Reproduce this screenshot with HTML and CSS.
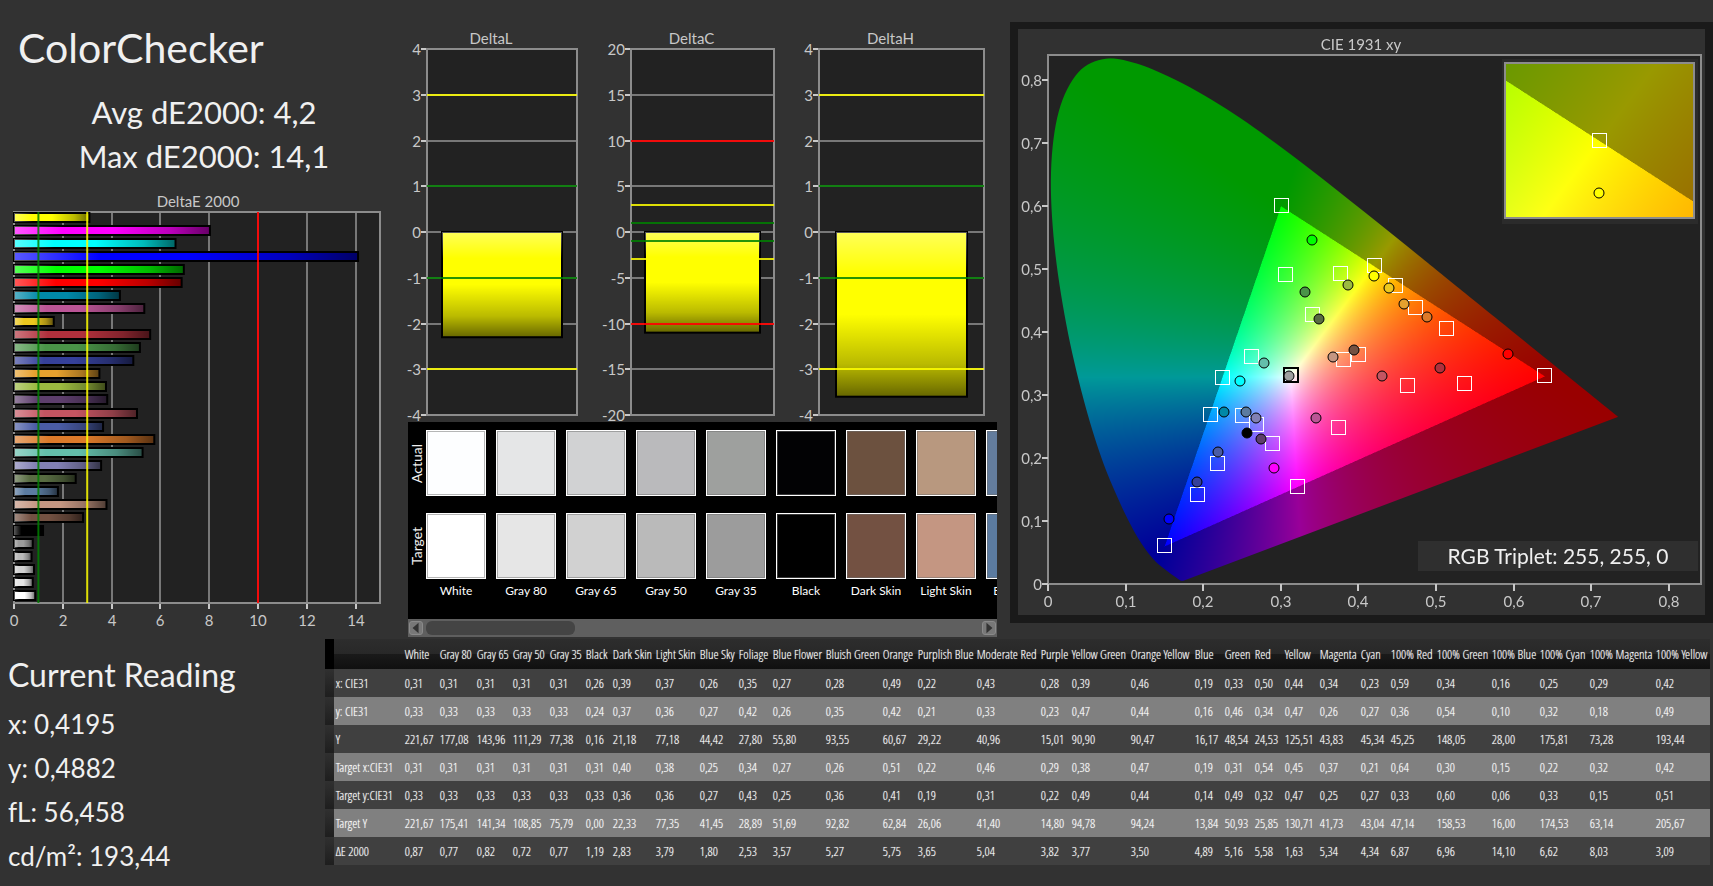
FILE: index.html
```
<!DOCTYPE html>
<html lang="en">
<head>
    <meta charset="UTF-8">
    <meta name="viewport" content="width=device-width, initial-scale=1.0">
    <title>ColorChecker</title>
    <link rel="stylesheet" href="styles.css">
</head>
<body>

<main class="top">
    <section class="summary">
        <h1>ColorChecker</h1>
        <div class="totals">
            <p>Avg dE2000: 4,2</p>
            <p>Max dE2000: 14,1</p>
        </div>
        <svg class="chart" id="deltaE" viewBox="0 0 408 443" role="img" aria-label="DeltaE 2000"></svg>
    </section>

    <section class="deltas">
        <svg class="chart" id="deltaLCH" viewBox="0 0 589 397" role="img" aria-label="DeltaL, DeltaC, DeltaH"></svg>
        <div class="swatches">
            <div class="swatch-row">
                <span class="side">Actual</span>
                <div class="patches" id="actual"></div>
            </div>
            <div class="swatch-row">
                <span class="side">Target</span>
                <div class="patches" id="target"></div>
            </div>
            <div class="swatch-row names">
                <span class="side"></span>
                <div class="patches" id="names"></div>
            </div>
        </div>
        <div class="scrollbar">
            <button type="button" aria-label="Scroll left"><svg viewBox="0 0 14 14"><path d="M10 1V13L3 7Z"/></svg></button>
            <div class="track"><div class="thumb"></div></div>
            <button type="button" aria-label="Scroll right"><svg viewBox="0 0 14 14"><path d="M4 1V13L11 7Z"/></svg></button>
        </div>
    </section>

    <section class="cie">
        <div class="cie-plot">
            <canvas id="gamut" width="1374" height="1172"></canvas>
            <svg class="chart" id="cie" viewBox="0 0 687 586" role="img" aria-label="CIE 1931 xy"></svg>
        </div>
    </section>
</main>

<div class="bottom">
    <section class="reading">
        <h2>Current Reading</h2>
        <p>x: 0,4195</p>
        <p>y: 0,4882</p>
        <p>fL: 56,458</p>
        <p>cd/m²: 193,44</p>
    </section>
    <table class="readings" id="readings"></table>
</div>

<script src="script.js"></script>
</body>
</html>
```
FILE: styles.css
```
* {
    box-sizing: border-box;
}
body {
    margin: 0;
    background: #323232;
    color: #f0f0f0;
    font-family: Lato, sans-serif;
}
h1, h2, p {
    margin: 0;
    font-weight: normal;
}
.top {
    display: grid;
    grid-template-columns: minmax(0, 408fr) minmax(0, 589fr) minmax(0, 716fr);
    align-items: start;
}
.chart {
    display: block;
    width: 100%;
    overflow: visible;
}
.chart text {
    font-size: 15px;
    fill: #c8c8c8;
}

/* left column */
.summary h1 {
    padding: 20px 0 0 18px;
    font-size: 41px;
    line-height: 56px;
}
.totals {
    padding: 14px 0 2px;
    text-align: center;
    font-size: 31px;
    line-height: 44px;
}
.summary .chart {
    margin-top: 12px;
}

/* bar charts */
.plot-bg {
    fill: #222;
}
.plot-frame {
    fill: none;
    stroke: #8c8c8c;
    stroke-width: 2;
}
.grid {
    stroke: #787878;
    stroke-width: 2;
}
.tick {
    stroke: #c8c8c8;
    stroke-width: 2;
}
.bar {
    stroke: #000;
    stroke-width: 2;
}
.green {
    stroke: #008000;
    stroke-width: 2;
    stroke-opacity: 0.85;
}
.yellow {
    stroke: #ff0;
    stroke-width: 2;
    stroke-opacity: 0.85;
}
.red {
    stroke: #f00;
    stroke-width: 2;
    stroke-opacity: 0.9;
}

/* middle column */
.deltas {
    padding-top: 25px;
}
.swatches {
    position: relative;
    height: 197px;
    padding-top: 8px;
    background: #000;
    overflow: hidden;
}
.swatch-row {
    display: flex;
    height: 83px;
}
.side {
    flex: none;
    width: 18px;
    height: 66px;
    writing-mode: vertical-rl;
    transform: rotate(180deg);
    text-align: center;
    font-size: 14px;
    line-height: 18px;
}
.patches {
    display: flex;
    gap: 10px;
}
.patch {
    flex: none;
    width: 60px;
    height: 66px;
    border: 1px solid #fff;
    box-shadow: inset 0 0 0 1px rgba(110, 110, 110, 0.5);
}
.names {
    height: 20px;
    margin-top: -15px;
}
.name {
    flex: none;
    width: 60px;
    text-align: center;
    white-space: nowrap;
    font-size: 12px;
    line-height: 20px;
    color: #fff;
}
.scrollbar {
    display: flex;
    height: 18px;
    padding: 2px 1px;
    gap: 3px;
    background: #5f5f5f;
}
.scrollbar button {
    width: 14px;
    height: 14px;
    padding: 0;
    border: 1px solid #8a8a8a;
    border-radius: 3px;
    background: #787878;
}
.scrollbar button svg {
    display: block;
    fill: #333;
}
.track {
    flex: 1;
}
.thumb {
    width: 27%;
    height: 14px;
    border-radius: 6px;
    background: #444;
}

/* chromaticity panel */
.cie {
    margin: 22px 0 0 13px;
    border: 8px solid #1a1a1a;
    border-top-width: 7px;
    background: #313131;
}
.cie-plot {
    display: grid;
}
.cie-plot canvas, .cie-plot svg {
    grid-area: 1 / 1;
    width: 100%;
}
.marker {
    fill: none;
    stroke: #fff;
    stroke-width: 1;
    shape-rendering: crispEdges;
}
.chart .white-point {
    stroke: #000;
    stroke-width: 2;
}
.reading-dot {
    stroke: #000;
    stroke-width: 1;
}
.triplet-box {
    fill: #2f2f2f;
}
.chart .triplet {
    font-size: 21px;
    fill: #f0f0f0;
}

/* bottom row */
.bottom {
    display: flex;
    align-items: flex-start;
    padding: 2px 4px 0 0;
}
.reading {
    flex: none;
    width: 19%;
    padding: 14px 0 0 8px;
    font-size: 26px;
    line-height: 44px;
}
.reading h2 {
    padding-bottom: 5px;
    font-size: 32px;
    line-height: 44px;
}
.readings {
    flex: 1;
    width: 81%;
    table-layout: fixed;
    border-collapse: collapse;
    font-family: "Open Sans Condensed Light", "Liberation Sans Narrow", "Roboto Condensed", "Open Sans Condensed", sans-serif;
    font-size: 13px;
    line-height: 28px;
    white-space: nowrap;
    color: #fff;
    text-shadow: 0 0 1px rgba(255, 255, 255, 0.6);
}
.readings th, .readings td {
    height: 28px;
    padding: 0 0 0 2px;
    text-align: left;
    font-weight: normal;
}
.readings thead th {
    height: 30px;
}
.readings thead tr {
    background: linear-gradient(#2d2d2d, #282828 50%, #1a1a1a 50%, #101010);
}
.readings tbody tr {
    background: #404040;
}
.readings tbody tr:nth-child(even) {
    background: #808080;
}
.readings thead .gutter {
    background: #000;
}
.readings tbody .gutter {
    background: linear-gradient(#303030, #1e1e1e);
}
```
FILE: script.js
```
// name, target colour, column width, then the table values
var samples = [
    ['White', '#ffffff', 35, '0,31', '0,33', '221,67', '0,31', '0,33', '221,67', '0,87'],
    ['Gray 80', '#e6e6e6', 37, '0,31', '0,33', '177,08', '0,31', '0,33', '175,41', '0,77'],
    ['Gray 65', '#d1d1d1', 36, '0,31', '0,33', '143,96', '0,31', '0,33', '141,34', '0,82'],
    ['Gray 50', '#bababa', 37, '0,31', '0,33', '111,29', '0,31', '0,33', '108,85', '0,72'],
    ['Gray 35', '#9c9c9c', 36, '0,31', '0,33', '77,38', '0,31', '0,33', '75,79', '0,77'],
    ['Black', '#000000', 27, '0,26', '0,24', '0,16', '0,31', '0,33', '0,00', '1,19'],
    ['Dark Skin', '#735142', 43, '0,39', '0,37', '21,18', '0,40', '0,36', '22,33', '2,83'],
    ['Light Skin', '#c49682', 44, '0,37', '0,36', '77,18', '0,38', '0,36', '77,35', '3,79'],
    ['Blue Sky', '#5b7ba0', 39, '0,26', '0,27', '44,42', '0,25', '0,27', '41,45', '1,80'],
    ['Foliage', '#586c42', 34, '0,35', '0,42', '27,80', '0,34', '0,43', '28,89', '2,53'],
    ['Blue Flower', '#8280b4', 53, '0,27', '0,26', '55,80', '0,27', '0,25', '51,69', '3,57'],
    ['Bluish Green', '#64beab', 57, '0,28', '0,35', '93,55', '0,26', '0,36', '92,82', '5,27'],
    ['Orange', '#dc7a2a', 35, '0,49', '0,42', '60,67', '0,51', '0,41', '62,84', '5,75'],
    ['Purplish Blue', '#4a5ca5', 59, '0,22', '0,21', '29,22', '0,22', '0,19', '26,06', '3,65'],
    ['Moderate Red', '#c45562', 64, '0,43', '0,33', '40,96', '0,46', '0,31', '41,40', '5,04'],
    ['Purple', '#5d3e6c', 31, '0,28', '0,23', '15,01', '0,29', '0,22', '14,80', '3,82'],
    ['Yellow Green', '#9bba40', 59, '0,39', '0,47', '90,90', '0,38', '0,49', '94,78', '3,77'],
    ['Orange Yellow', '#e6a12e', 64, '0,46', '0,44', '90,47', '0,47', '0,44', '94,24', '3,50'],
    ['Blue', '#35409a', 30, '0,19', '0,16', '16,17', '0,19', '0,14', '13,84', '4,89'],
    ['Green', '#4a9448', 30, '0,33', '0,46', '48,54', '0,31', '0,49', '50,93', '5,16'],
    ['Red', '#b0303c', 30, '0,50', '0,34', '24,53', '0,54', '0,32', '25,85', '5,58'],
    ['Yellow', '#ecc81e', 35, '0,44', '0,47', '125,51', '0,45', '0,47', '130,71', '1,63'],
    ['Magenta', '#bb5596', 41, '0,34', '0,26', '43,83', '0,37', '0,25', '41,73', '5,34'],
    ['Cyan', '#0088a8', 30, '0,23', '0,27', '45,34', '0,21', '0,27', '43,04', '4,34'],
    ['100% Red', '#ff0000', 46, '0,59', '0,36', '45,25', '0,64', '0,33', '47,14', '6,87'],
    ['100% Green', '#00ff00', 55, '0,34', '0,54', '148,05', '0,30', '0,60', '158,53', '6,96'],
    ['100% Blue', '#0000ff', 48, '0,16', '0,10', '28,00', '0,15', '0,06', '16,00', '14,10'],
    ['100% Cyan', '#00ffff', 50, '0,25', '0,32', '175,81', '0,22', '0,33', '174,53', '6,62'],
    ['100% Magenta', '#ff00ff', 66, '0,29', '0,18', '73,28', '0,32', '0,15', '63,14', '8,03'],
    ['100% Yellow', '#ffff00', 56, '0,42', '0,49', '193,44', '0,42', '0,51', '205,67', '3,09']
];
var rowNames = ['x: CIE31', 'y: CIE31', 'Y', 'Target x:CIE31', 'Target y:CIE31', 'Target Y', 'ΔE 2000'];
var actualColors = ['#fdfeff', '#e5e6e7', '#d1d2d3', '#bababc', '#9ea09e', '#020204', '#6c513f', '#b8987f', '#637c9c'];

function line(x1, y1, x2, y2, cls) {
    return '<line class="' + cls + '" x1="' + x1 + '" y1="' + y1 + '" x2="' + x2 + '" y2="' + y2 + '"/>';
}
function rect(x, y, w, h, cls, fill) {
    return '<rect class="' + cls + '" x="' + x + '" y="' + y + '" width="' + w + '" height="' + h + '"' +
        (fill ? ' fill="' + fill + '"' : '') + '/>';
}
function text(x, y, anchor, value, cls) {
    return '<text x="' + x + '" y="' + y + '" text-anchor="' + anchor + '" class="' + (cls || '') + '">' + value + '</text>';
}
function shine(id, x2, y2) {
    return '<defs><linearGradient id="' + id + '" x1="0" y1="0" x2="' + x2 + '" y2="' + y2 + '">' +
        '<stop offset="0" stop-color="#fff" stop-opacity="0.35"/>' +
        '<stop offset="0.25" stop-color="#fff" stop-opacity="0"/>' +
        '<stop offset="0.5" stop-color="#000" stop-opacity="0"/>' +
        '<stop offset="0.8" stop-color="#000" stop-opacity="0.27"/>' +
        '<stop offset="1" stop-color="#000" stop-opacity="0.6"/></linearGradient></defs>';
}

function drawDeltaE() {
    var left = 14, top = 20, width = 366, height = 391, unit = width / 15;
    var out = shine('shineX', 1, 0) + text(198, 15, 'middle', 'DeltaE 2000') + rect(left, top, width, height, 'plot-bg');
    for (var v = 0; v < 15; v += 2) {
        var x = Math.round(left + v * unit);
        out += line(x, top, x, top + height, 'grid') + line(x, top + height, x, top + height + 6, 'tick');
        out += text(x, top + height + 23, 'middle', v);
    }
    out += rect(left, top, width, height, 'plot-frame');
    for (var i = 0; i < samples.length; i++) {
        var s = samples[samples.length - 1 - i];
        var w = parseFloat(s[9].replace(',', '.')) * unit;
        var y = Math.round(top + 1 + i * height / samples.length);
        out += rect(left, y, w, 9, 'bar', s[1]) + rect(left, y, w, 9, '', 'url(#shineX)');
    }
    out += line(left + unit, top, left + unit, top + height, 'green');
    out += line(left + 3 * unit, top, left + 3 * unit, top + height, 'yellow');
    out += line(left + 10 * unit, top, left + 10 * unit, top + height, 'red');
    document.getElementById('deltaE').innerHTML = out;
}

function drawDelta(title, left, width, step, value, limits) {
    var top = 24, height = 366, unit = height / (8 * step), zero = top + height / 2;
    var out = text(left + width / 2 - 11, 19, 'middle', title) + rect(left, top, width, height, 'plot-bg');
    for (var i = -4; i <= 4; i++) {
        var y = Math.round(zero - i * step * unit);
        out += line(left, y, left + width, y, 'grid') + line(left - 6, y, left, y, 'tick');
        out += text(left - 6, y + 6, 'end', i * step);
    }
    out += rect(left, top, width, height, 'plot-frame');
    var pad = Math.round(width / 10);
    out += rect(left + pad, zero, width - 2 * pad, -value * unit, 'bar', '#ffff00');
    out += rect(left + pad, zero, width - 2 * pad, -value * unit, '', 'url(#shineY)');
    limits.forEach(function (l) {
        [l[0], -l[0]].forEach(function (v) {
            var y = Math.round(zero - v * unit);
            out += line(left, y, left + width, y, l[1]);
        });
    });
    return out;
}

function drawSwatches() {
    var actual = '', target = '', names = '';
    actualColors.forEach(function (color, i) {
        actual += '<div class="patch" style="background-color:' + color + '"></div>';
        target += '<div class="patch" style="background-color:' + samples[i][1] + '"></div>';
        names += '<div class="name">' + samples[i][0] + '</div>';
    });
    document.getElementById('actual').innerHTML = actual;
    document.getElementById('target').innerHTML = target;
    document.getElementById('names').innerHTML = names;
}

function drawTable() {
    var out = '<colgroup><col style="width:9px"><col style="width:69px">';
    var head = '<thead><tr><th class="gutter"></th><th></th>';
    samples.forEach(function (s) {
        out += '<col style="width:' + s[2] + 'px">';
        head += '<th scope="col">' + s[0] + '</th>';
    });
    out += '</colgroup>' + head + '</tr></thead><tbody>';
    rowNames.forEach(function (name, r) {
        out += '<tr><td class="gutter"></td><th scope="row">' + name + '</th>';
        samples.forEach(function (s) {
            out += '<td>' + s[r + 3] + '</td>';
        });
        out += '</tr>';
    });
    document.getElementById('readings').innerHTML = out + '</tbody>';
}

// CIE 1931 diagram
var originX = 30, originY = 555, scaleX = 776, scaleY = 630;
var locus = [
    [.1741, .0050], [.1714, .0051], [.1689, .0069], [.1644, .0109], [.1566, .0177], [.1440, .0297], [.1355, .0399],
    [.1241, .0578], [.1096, .0868], [.0913, .1327], [.0687, .2007], [.0454, .2950], [.0235, .4127], [.0082, .5384],
    [.0039, .6548], [.0139, .7502], [.0389, .8120], [.0743, .8338], [.1142, .8262], [.1547, .8059], [.1929, .7816],
    [.2296, .7543], [.2658, .7243], [.3016, .6923], [.3373, .6589], [.3731, .6245], [.4087, .5896], [.4441, .5547],
    [.4788, .5202], [.5125, .4866], [.5752, .4242], [.6270, .3725], [.6658, .3340], [.6915, .3083], [.7190, .2809],
    [.7347, .2653]
];
var targets = [
    [263, 176], [267, 245], [322, 244], [356, 236], [377, 256], [397, 278], [428, 299], [294, 285], [233, 327],
    [204, 348], [192, 385], [224, 386], [238, 395], [199, 434], [179, 465], [254, 414], [279, 457], [320, 398],
    [389, 356], [325, 330], [340, 325], [446, 354], [526, 346], [146, 516]
];
var dots = [
    [294, 211, '#00ff00'], [287, 263, '#4a9448'], [330, 256, '#9bba40'], [356, 247, '#ffff00'], [371, 259, '#ecc81e'],
    [386, 275, '#e6a12e'], [409, 288, '#dc7a2a'], [301, 290, '#586c42'], [246, 334, '#64beab'], [222, 352, '#00ffff'],
    [206, 383, '#0088a8'], [228, 383, '#5b7ba0'], [238, 389, '#8280b4'], [229, 404, '#000000'], [243, 410, '#5d3e6c'],
    [200, 423, '#4a5ca5'], [179, 453, '#35409a'], [256, 439, '#ff00ff'], [298, 389, '#bb5596'], [315, 328, '#c49682'],
    [336, 321, '#735142'], [364, 347, '#c45562'], [422, 339, '#b0303c'], [271, 347, '#9f9f9f'], [490, 325, '#ff0000'],
    [151, 490, '#0000ff']
];

function xyColor(x, y) {
    var X = x / y, Z = (1 - x - y) / y;
    var rgb = [
        3.2406 * X - 1.5372 - 0.4986 * Z,
        -0.9689 * X + 1.8758 + 0.0415 * Z,
        0.0557 * X - 0.2040 + 1.0570 * Z
    ];
    var max = Math.max(rgb[0], rgb[1], rgb[2]);
    var level = Math.min(rgb[0], rgb[1], rgb[2]) < 0 ? 153 : 255;
    return rgb.map(function (c) {
        return level * Math.max(c, 0) / max;
    });
}

function paintField(width, height, toX, toY) {
    var field = document.createElement('canvas');
    field.width = width;
    field.height = height;
    var ctx = field.getContext('2d');
    var image = ctx.createImageData(width, height);
    for (var j = 0, k = 0; j < height; j++) {
        for (var i = 0; i < width; i++, k += 4) {
            var c = xyColor(toX(i), Math.max(toY(j), 0.001));
            image.data[k] = c[0];
            image.data[k + 1] = c[1];
            image.data[k + 2] = c[2];
            image.data[k + 3] = 255;
        }
    }
    ctx.putImageData(image, 0, 0);
    return field;
}

function drawGamut() {
    var ctx = document.getElementById('gamut').getContext('2d');
    ctx.fillStyle = '#222';
    ctx.fillRect(2 * originX, 52, 1306, 1058);

    // horseshoe, drawn at double size
    var field = paintField(1374, 1172,
        function (i) { return (i / 2 - originX) / scaleX; },
        function (j) { return (originY - j / 2) / scaleY; });
    var pts = locus.map(function (p) {
        return [2 * (originX + p[0] * scaleX), 2 * (originY - p[1] * scaleY)];
    });
    ctx.save();
    ctx.beginPath();
    ctx.moveTo(pts[0][0], pts[0][1]);
    for (var n = 0; n < pts.length - 1; n++) {
        // smooth curve through every point
        var a = pts[Math.max(n - 1, 0)], b = pts[n], c = pts[n + 1], d = pts[Math.min(n + 2, pts.length - 1)];
        ctx.bezierCurveTo(
            b[0] + (c[0] - a[0]) / 6, b[1] + (c[1] - a[1]) / 6,
            c[0] - (d[0] - b[0]) / 6, c[1] - (d[1] - b[1]) / 6,
            c[0], c[1]);
    }
    ctx.closePath();
    ctx.clip();
    ctx.drawImage(field, 0, 0);
    ctx.restore();

    // close-up of the selected sample
    ctx.fillStyle = '#2b2b2b';
    ctx.fillRect(968, 60, 392, 330);
    ctx.drawImage(paintField(378, 312,
        function (i) { return 0.4193 + (i / 2 - 94) / 3840; },
        function (j) { return 0.5053 - (j / 2 - 78) / 3120; }), 974, 67);
}

function drawCie() {
    var out = text(343, 21, 'middle', 'CIE 1931 xy') + rect(30, 26, 653, 529, 'plot-frame');
    for (var i = 0; i <= 8; i++) {
        var label = i ? '0,' + i : '0';
        var x = Math.round(originX + i * scaleX / 10), y = Math.round(originY - i * scaleY / 10);
        out += line(x, 555, x, 562, 'tick') + text(x, 578, 'middle', label);
        out += line(24, y, 30, y, 'tick') + text(24, y + 6, 'end', label);
    }
    targets.forEach(function (t) {
        out += rect(t[0] - 7, t[1] - 7, 14, 14, 'marker');
    });
    out += rect(266, 339, 14, 14, 'marker white-point');
    dots.forEach(function (d) {
        out += '<circle class="reading-dot" cx="' + d[0] + '" cy="' + d[1] + '" r="5" fill="' + d[2] + '"/>';
    });
    out += rect(487, 34, 189, 155, 'plot-frame') + rect(574, 104, 14, 14, 'marker');
    out += '<circle class="reading-dot" cx="581" cy="164" r="5" fill="#ffff00"/>';
    out += rect(400, 512, 280, 30, 'triplet-box') + text(540, 535, 'middle', 'RGB Triplet: 255, 255, 0', 'triplet');
    document.getElementById('cie').innerHTML = out;
}

drawDeltaE();
document.getElementById('deltaLCH').innerHTML = shine('shineY', 0, 1) +
    drawDelta('DeltaL', 19, 150, 1, -2.3, [[3, 'yellow'], [1, 'green']]) +
    drawDelta('DeltaC', 223, 143, 5, -11, [[10, 'red'], [3, 'yellow'], [1, 'green']]) +
    drawDelta('DeltaH', 411, 165, 1, -3.6, [[3, 'yellow'], [1, 'green']]);
drawSwatches();
drawTable();
drawGamut();
drawCie();
```
